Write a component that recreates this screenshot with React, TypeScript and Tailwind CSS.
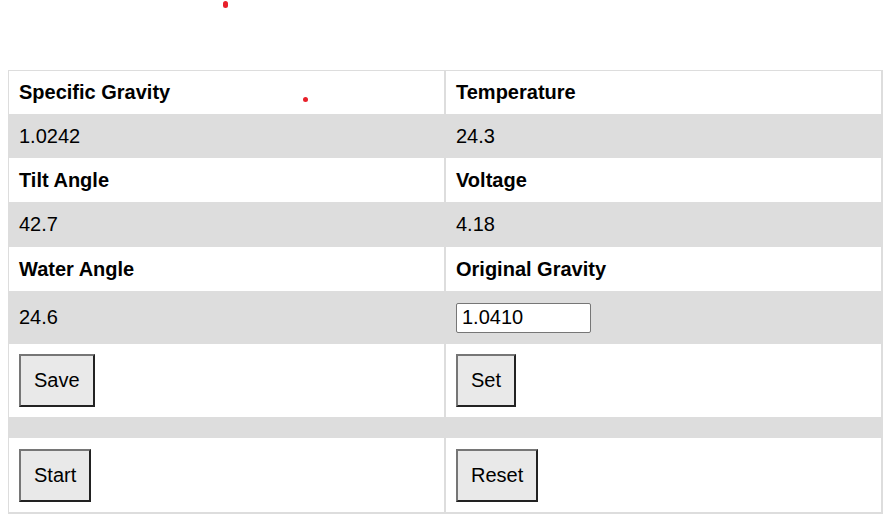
import React from "react";

const font = { fontFamily: '"Liberation Sans", Arial, sans-serif' };

type Row = { left: React.ReactNode; right: React.ReactNode; shade?: boolean; h: string };

function Btn({ label }: { label: string }) {
  return (
    <button className="bg-[#e9e9e9] text-black text-[20px] leading-[23px] px-[13px] py-[13px] border-2 border-t-[#767676] border-l-[#767676] border-b-[#222] border-r-[#222]">
      {label}
    </button>
  );
}

export default function App() {
  const rows: Row[] = [
    { left: <b>Specific Gravity</b>, right: <b>Temperature</b>, h: "h-[43px]" },
    { left: "1.0242", right: "24.3", shade: true, h: "h-[44px]" },
    { left: <b>Tilt Angle</b>, right: <b>Voltage</b>, h: "h-[44px]" },
    { left: "42.7", right: "4.18", shade: true, h: "h-[45px]" },
    { left: <b>Water Angle</b>, right: <b>Original Gravity</b>, h: "h-[44px]" },
    {
      left: "24.6",
      right: (
        <input
          defaultValue="1.0410"
          className="w-[135px] h-[30px] bg-white border border-[#767676] rounded-[2px] px-[5px] text-[20px] text-black outline-none"
          style={font}
        />
      ),
      shade: true,
      h: "h-[53px]",
    },
    { left: <Btn label="Save" />, right: <Btn label="Set" />, h: "h-[73px]" },
    { left: null, right: null, shade: true, h: "h-[21px]" },
    { left: <Btn label="Start" />, right: <Btn label="Reset" />, h: "h-[74px]" },
  ];

  return (
    <div className="relative w-[887px] h-[517px] bg-white text-black text-[20px] leading-[23px]" style={font}>
      {/* stray red dots */}
      <span className="absolute left-[223px] top-[1px] w-[5px] h-[7px] rounded-full bg-[#e8202a]" />
      <span className="absolute left-[303px] top-[97px] w-[5px] h-[5px] rounded-full bg-[#e8202a]" />

      <div className="pt-[70px] pl-2">
        <div className="w-[875px] border-t border-l border-r-2 border-b-2 border-[#ddd]">
          {rows.map((r, i) => (
            <div key={i} className={`grid grid-cols-[437px_1fr] ${r.h} ${r.shade ? "bg-[#ddd]" : "bg-white"}`}>
              <div className="flex items-center pl-[10px] border-r-2 border-[#ddd]">{r.left}</div>
              <div className="flex items-center pl-[10px]">{r.right}</div>
            </div>
          ))}
        </div>
      </div>
    </div>
  );
}
